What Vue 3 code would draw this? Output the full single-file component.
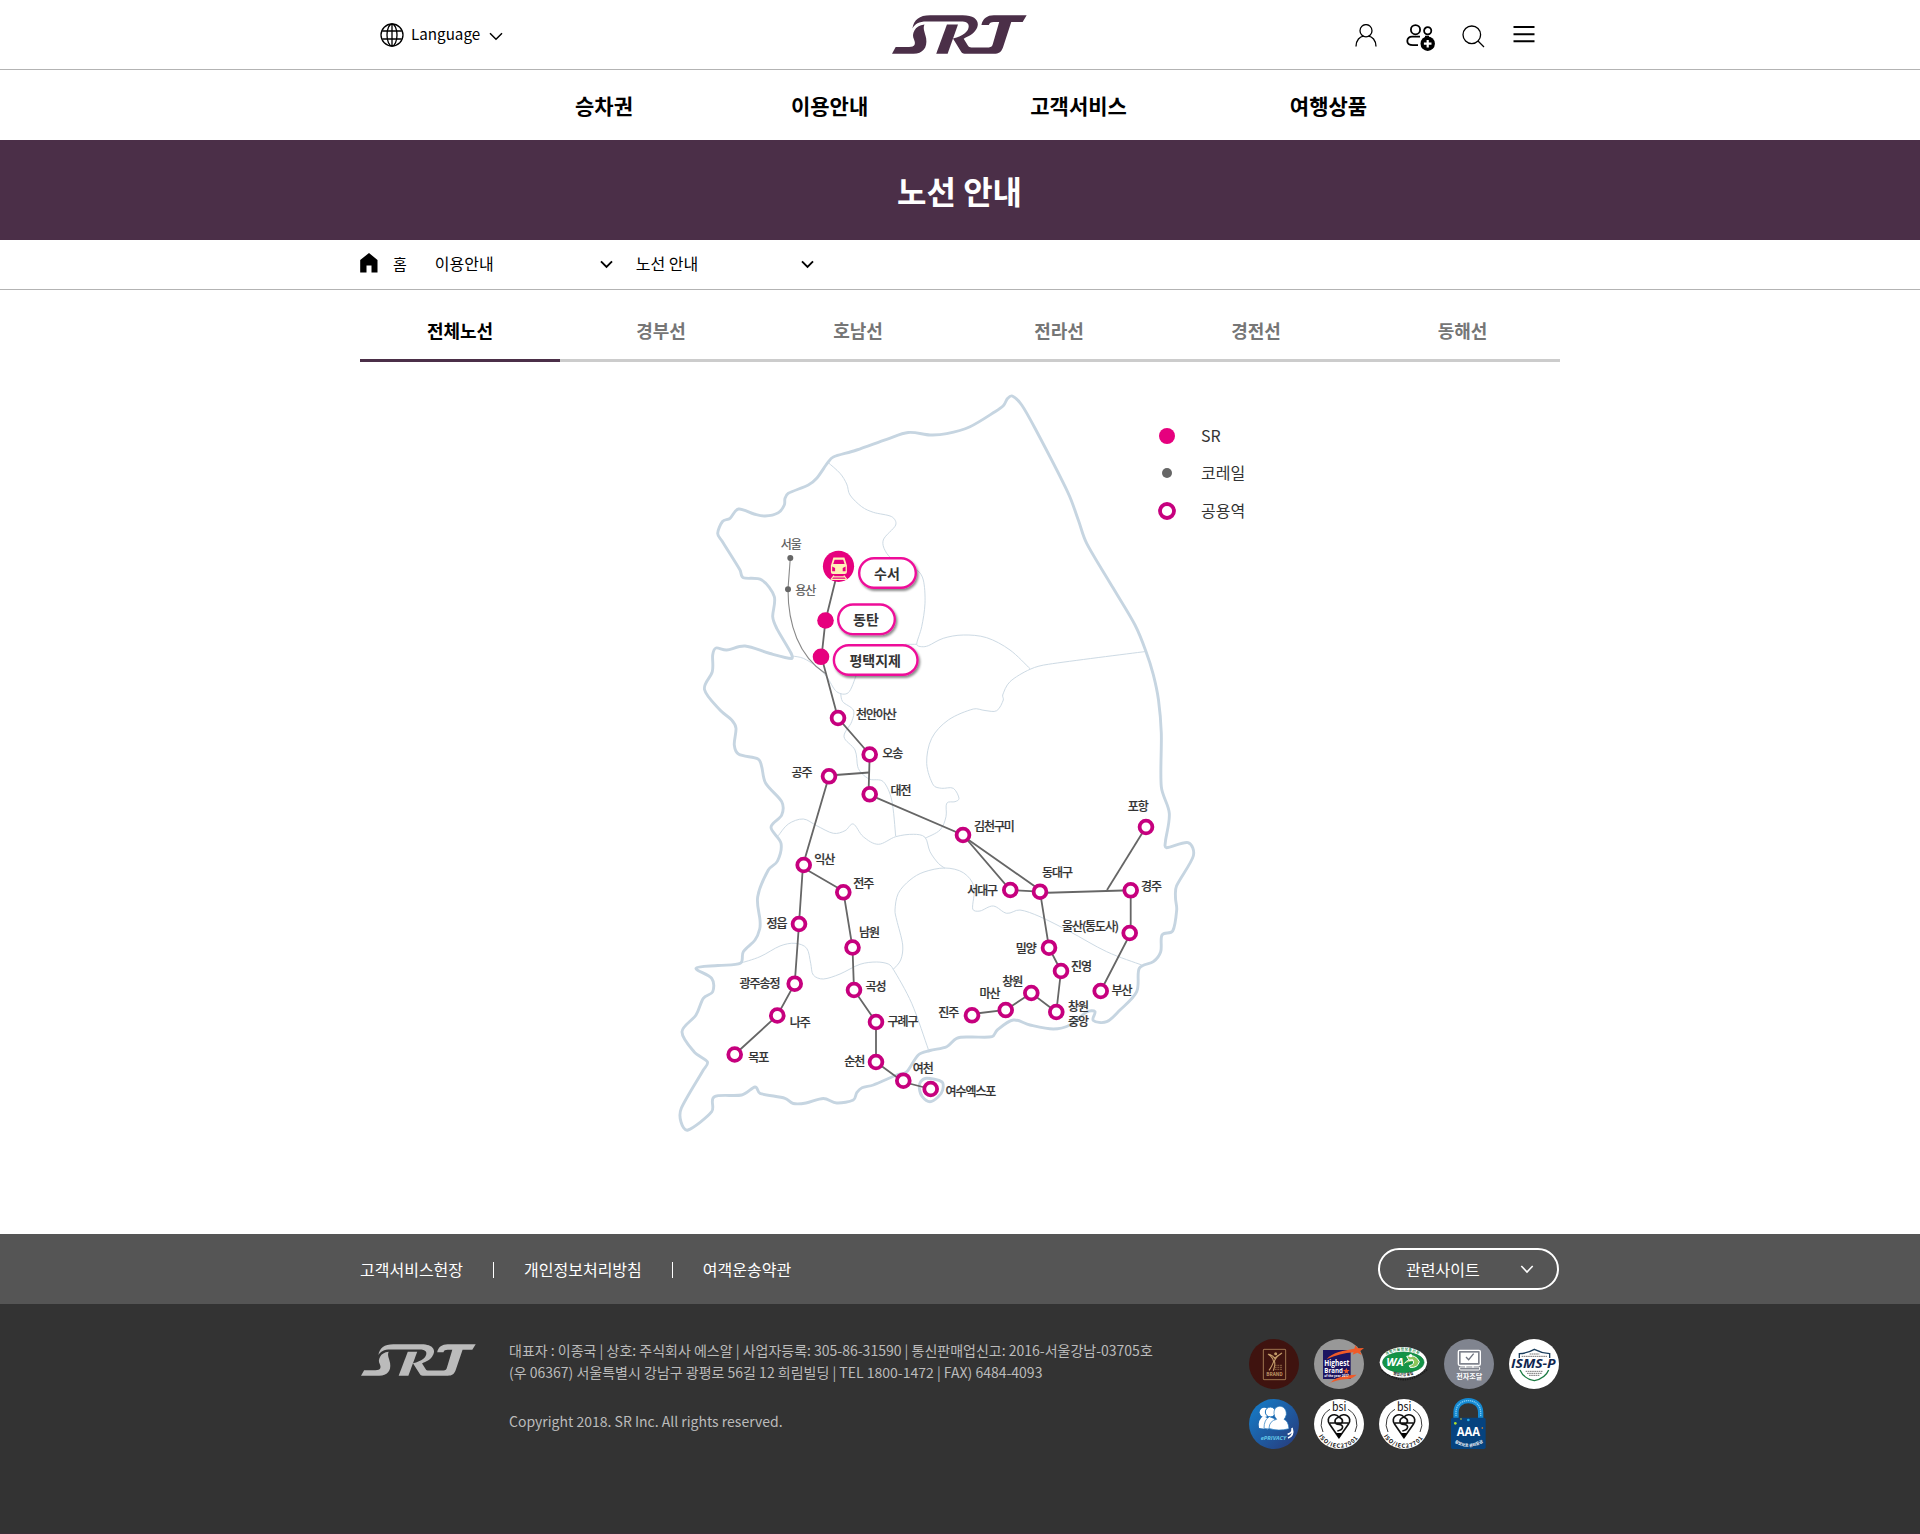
<script setup>
const menu = ['승차권', '이용안내', '고객서비스', '여행상품']
const tabs = ['전체노선', '경부선', '호남선', '전라선', '경전선', '동해선']
const policies = ['고객서비스헌장', '개인정보처리방침', '여객운송약관']

// Catmull-Rom spline through the given points
function smooth(source, closed = false) {
  const p = source.trim().split(/\s+/).map((s) => s.split(',').map(Number))
  const n = p.length
  const at = (i) => (closed ? p[(i + n) % n] : p[Math.max(0, Math.min(n - 1, i))])
  let d = `M${p[0][0]} ${p[0][1]}`
  const last = closed ? n : n - 1
  for (let i = 0; i < last; i++) {
    const a = at(i - 1)
    const b = at(i)
    const c = at(i + 1)
    const e = at(i + 2)
    const len = Math.hypot(c[0] - b[0], c[1] - b[1])
    const k1 = Math.min(1 / 6, (0.36 * len) / (Math.hypot(c[0] - a[0], c[1] - a[1]) || 1))
    const k2 = Math.min(1 / 6, (0.36 * len) / (Math.hypot(e[0] - b[0], e[1] - b[1]) || 1))
    const x1 = b[0] + (c[0] - a[0]) * k1
    const y1 = b[1] + (c[1] - a[1]) * k1
    const x2 = c[0] - (e[0] - b[0]) * k2
    const y2 = c[1] - (e[1] - b[1]) * k2
    d += `C${x1.toFixed(1)} ${y1.toFixed(1)} ${x2.toFixed(1)} ${y2.toFixed(1)} ${c[0]} ${c[1]}`
  }
  return closed ? d + 'Z' : d
}

const coast = smooth(
  `1012.3,396 1007.5,398.5 1003.5,405.5 995,411.7 970,426.7 946.7,433.7 930,435 908.3,432.5 886.7,439.3 856.7,450
  833.3,457 827.7,462.7 816.7,478.3 808.3,485 788.3,493.3 785,498.3 784.3,505 778.3,512.7 765,516 754,514 738.5,509
  730,518.3 722.5,521.5 717.7,533.3 722,541 740,570 743.3,577.7 761.7,580 774.3,596.7 772.7,616.7 776.7,628.3
  791,653 791.3,658.5 770,653.5 745,646 726.7,650 716,648 712.7,655 712.3,671.7 704.5,689.5 720,710 731.7,720
  736,728.3 734.3,745 738.8,754.3 758,759 761.7,766.7 765.7,783.3 781.7,801.7 781.7,815 771,827.3 781,843.3
  777.5,861 768.3,870 757.7,896.7 760,920 759.7,929 755,940 743.3,951.7 740.3,963.3 718,965.5 696,968.3 711.7,978.3
  712.7,991.7 703.3,998.3 696,1015 682,1031.7 694,1051.7 707.3,1061.7 703.3,1070 681.3,1108.3 681,1122
  688,1130 711.7,1111.7 714.3,1096.7 741.7,1095 755,1087 760,1093.3 785,1098.3 793.3,1103.5 806,1103 823.3,1098.5
  836.7,1103 853.3,1100 856.7,1092.7 862,1087.7 873.3,1085 896.7,1075 906.7,1071.7 918.3,1055 930,1050.5
  946.7,1046.7 956.7,1038.3 970,1037 992,1036.7 997.3,1030 1013.3,1020 1030,1025 1053.3,1029 1070,1025
  1086.7,1012 1095,1011.7 1093.3,1020.5 1106.7,1021.7 1120,1010 1136.7,991.7 1139.3,968.3 1153.3,961.7 1160.7,951.7
  1162,935 1172.7,931 1176.7,910 1175.5,898 1176.5,886 1193.3,856 1188,842.7 1166.5,847.7 1165.5,841 1169.3,813.3
  1161.3,786.7 1161.3,733 1158.5,700 1153.3,674.7 1145.7,650.7 1135,625 1113.3,588.3 1086.7,543.3 1078.3,520
  1068.3,493.3 1035,428.3 1021.7,405`,
  true
)
const island = smooth(
  '920.7,1081.7 926.7,1078.3 941.7,1081.7 942.7,1090 938.3,1096.7 930,1101.7 922.3,1096.7 919.3,1088',
  true
)
const borders = [
  '828.3,462.7 840,473.3 846.7,484 850,495 861.7,506.7 873.3,512.3 891.7,516.7 895.7,525 883.3,540 886.7,553.3 897,562 916.7,570 923.3,580 925,603.3 921.7,626.7 916.7,644.3 921.7,646.7 928.3,645.7 943.3,638.3 963.3,635 986.7,637.7 1010,650 1030,668.7',
  '1145.7,651.5 1048.3,664.3 1030,669.3 1010,681.7 1002.7,695 1003.3,700 996.7,710.7 985,710.5 973.3,709 948.3,720 931.7,738.3 926.7,763.3 933.3,785 941.7,788.3 953.3,788.3 959,798.3 955,801.7 946.7,803.3 946,816.7 940,830 925,838.3',
  '916.7,644.3 905,644.3',
  '792.3,656 803.3,658.3 816.7,666.7 826.7,676.7 836.7,691.7 848.3,692.7 856,676',
  '840.7,693.3 842.7,701.7 853.3,710 851.7,721.7 844,736.7 855,750 857.7,766.7 861.7,773.3 870,779.3 883.3,781.7 891.7,800 895.7,836',
  '778.3,835.7 788.3,824 803.3,819 816.7,825.7 833.3,833.3 845,830.7 853.3,824 863.3,836.7 878.3,844.3 895.7,836.7 913.3,834.3 925,837.3 930,851.7 938.3,863.3 945,868.3',
  '893.3,969.3 900.7,960 902.7,945 896.7,920 895,910 898.3,893.3 910,880 924,872 945,868 963.3,872.7 974,886.7 972.7,909 980,911 993.3,906 1006.7,913.3 1020,910 1040,916.7 1070,931.7 1106.7,951.7 1141.7,965',
  '740,963.3 760,956.7 780,946 795,943.3 806.7,948.3 810.7,963.3 813.3,975 823.3,979 840,974 860,964.3 876.7,962 888.3,964 893.3,969.3 911.7,1003.3 928.3,1049.3'
].map((b) => smooth(b))

const rails = [
  '838,570 825.5,620.5 821.5,657 838,718 869.7,754.5 868.5,794.3 963,835 1010.3,890 1040,891.7',
  '829,775.5 869,772.5',
  '829,776.3 803,865 799,924 794.7,983.7 777.3,1015.5 734.7,1054.5',
  '803.7,868 843.3,891 852.5,947.5 854,990 876,1022 876,1062 903.3,1082 930.7,1089',
  '963,836 1040,890 1040,893 1130.7,890.3 1130.7,933 1100.7,991',
  '1146,827 1107,890',
  '1040,891.7 1049,947.7 1061,971 1056.3,1012 1031.3,993 1005.7,1010 972,1014'
]

const stations = [
  [838, 718], [869.7, 754.5], [829, 776.3], [869.7, 794.3], [963, 835], [803.7, 865],
  [843.3, 892.3], [799, 924], [852.5, 947.5], [794.7, 983.7], [854, 990], [777.3, 1015.5],
  [876, 1022], [734.7, 1054.5], [876, 1062], [903.3, 1080.7], [930.7, 1089], [1010.3, 890],
  [1040, 891.7], [1130.7, 890.3], [1146, 827], [1129.7, 933], [1049, 947.7], [1061, 971],
  [1100.7, 991], [1031.3, 993], [1005.7, 1010], [1056.3, 1012], [972, 1015.3]
]

const names = [
  ['천안아산', 856, 718.5], ['오송', 882.2, 757.5], ['공주', 791.6, 776.5], ['대전', 890.6, 794.5],
  ['김천구미', 974, 830.5], ['익산', 814.2, 864], ['전주', 853.2, 888], ['서대구', 967.2, 894.5],
  ['동대구', 1042, 877], ['경주', 1141, 891], ['포항', 1127.8, 810.5], ['정읍', 766.6, 928],
  ['남원', 859, 937], ['광주송정', 739.6, 988], ['곡성', 865.6, 991], ['나주', 789.8, 1026.5],
  ['구례구', 887.6, 1025.5], ['목포', 748.2, 1062], ['순천', 844.2, 1066], ['여천', 912.8, 1073],
  ['여수엑스포', 945.6, 1095.5], ['울산(통도사)', 1062, 930.5], ['밀양', 1015.8, 952.5],
  ['진영', 1071, 971], ['창원', 1002.2, 986], ['마산', 979.5, 998], ['진주', 938.2, 1017],
  ['창원', 1068, 1011], ['중앙', 1068, 1025.5], ['부산', 1111.6, 995]
]

const pills = [
  { name: '수서', x: 858, y: 557, w: 59 },
  { name: '동탄', x: 837, y: 603.3, w: 59 },
  { name: '평택지제', x: 832.7, y: 644, w: 86 }
]

const logo = [
  'M82 62C86 36 102 22 135 22H232C276 22 286 46 270 68C260 84 240 88 235 93L248 114C250 118 253 119 258 119H310C318 119 320 116 322 109L341 42H325C316 42 312 45 310 51H288C292 32 305 22 325 22H423L411 42H377L352 120C346 134 340 138 325 138H238C232 138 229 136 226 130L203 92C235 84 250 70 250 55C250 45 240 41 228 41H125C100 41 90 48 82 62Z',
  'M185 50H218L187 138H153Z',
  'M88 68C93 58 103 52 118 50C112 62 120 75 123 92C127 120 113 138 85 138H21L32 118H72C90 118 92 108 87 96C82 85 83 78 88 68Z'
]
</script>

<template>
  <div class="page">
    <header class="top">
      <div class="wrap top-row">
        <div class="language">
          <svg width="24" height="24" viewBox="0 0 24 24" class="line">
            <circle cx="12" cy="12" r="11" />
            <ellipse cx="12" cy="12" rx="5" ry="11" />
            <path d="M12 1V23M2.2 8H21.8M2.2 16H21.8" />
          </svg>
          <span>Language</span>
          <svg width="14" height="9" viewBox="0 0 14 9" class="line"><path d="M1 1.2L7 7.2L13 1.2" stroke-width="1.5" /></svg>
        </div>
        <svg class="logo" width="135" height="39" viewBox="21 21 403 118" preserveAspectRatio="none">
          <path v-for="d in logo" :key="d" :d="d" />
        </svg>
        <div class="tools">
          <svg width="22" height="23" viewBox="0 0 22 23" class="line">
            <ellipse cx="11" cy="6.7" rx="6" ry="6.1" />
            <path d="M1 22.5C1 16 5 12.5 8.6 12.2M21 22.5C21 16 17 12.5 13.4 12.2" />
          </svg>
          <svg width="30" height="28" viewBox="0 0 30 28" class="line bold">
            <circle cx="9.5" cy="5.7" r="4.6" />
            <circle cx="21.7" cy="6.8" r="3.6" />
            <path d="M14 12.7H6C3.5 12.7 1.3 14 1.3 17C1.3 20.5 4 21.2 7 21.2H12M19 12.7H23" />
            <circle cx="21.7" cy="19.7" r="7.2" class="solid" />
            <path d="M21.7 15.9V23.5M17.9 19.7H25.5" class="white" />
          </svg>
          <svg width="23" height="23" viewBox="0 0 23 23" class="line">
            <circle cx="9.8" cy="9.8" r="8.8" />
            <path d="M16 16L22 22" />
          </svg>
          <svg width="22" height="18" viewBox="0 0 22 18" class="line">
            <path d="M.5 2H21.5M.5 9.2H21.5M.5 16.3H21.5" stroke-width="1.9" />
          </svg>
        </div>
      </div>
    </header>

    <nav class="menu">
      <a v-for="m in menu" :key="m">{{ m }}</a>
    </nav>

    <div class="hero"><h1>노선 안내</h1></div>

    <div class="crumbs">
      <div class="wrap crumb-row">
        <svg width="18" height="20" viewBox="0 0 18 20"><path d="M9 0L17.5 7V19.5H11.5V12.5H6.5V19.5H.2V7Z" /></svg>
        <span class="home">홈</span>
        <div class="select">
          <span>이용안내</span>
          <svg width="13" height="9" viewBox="0 0 13 9" class="line"><path d="M1 1.4L6.5 7L12 1.4" stroke-width="1.9" /></svg>
        </div>
        <div class="select">
          <span>노선 안내</span>
          <svg width="13" height="9" viewBox="0 0 13 9" class="line"><path d="M1 1.4L6.5 7L12 1.4" stroke-width="1.9" /></svg>
        </div>
      </div>
    </div>

    <main>
      <ul class="wrap tabs">
        <li v-for="(t, i) in tabs" :key="t" :class="{ on: i === 0 }">{{ t }}</li>
      </ul>

      <svg class="map" width="1200" height="872" viewBox="360 362 1200 872">
        <defs>
          <filter id="drop" x="-10%" y="-20%" width="130%" height="160%">
            <feDropShadow dx="1.5" dy="2" stdDeviation="1" flood-color="#000" flood-opacity=".45" />
          </filter>
        </defs>
        <path v-for="b in borders" :key="b" :d="b" class="border" />
        <path :d="coast" class="coast" />
        <path :d="island" class="coast" />

        <path d="M790.3 558L788 589.3C788 625 799 656 825 673.3" class="korail" />
        <polyline v-for="r in rails" :key="r" :points="r" class="rail" />
        <circle cx="790.3" cy="558" r="3" fill="#666" />
        <circle cx="788" cy="589.3" r="3" fill="#666" />
        <circle v-for="(s, i) in stations" :key="i" :cx="s[0]" :cy="s[1]" r="6.4" class="ring" />
        <circle cx="825.5" cy="620.5" r="8.3" fill="#e6007e" />
        <circle cx="821" cy="656.8" r="8.3" fill="#e6007e" />

        <circle cx="838.5" cy="566.3" r="15.6" fill="#e6007e" />
        <g transform="translate(838.9 567.5)">
          <path d="M-5.500 -10H5.500L8 -2V4.500Q8 6.500 6 6.500H-6Q-8 6.500 -8 4.500V-2Z" fill="#fff0b8" />
          <path d="M-4.300 -7.700H4.300L5.700 -3.500H-5.700Z" fill="#e6007e" />
          <path d="M-6.700 -1L-3.800 .6V3.800H-6.700ZM6.700 -1L3.800 .6V3.800H6.700Z" fill="#e6007e" />
          <path d="M-5 8L-8 12M5 8L8 12M-6 9.300H6M-7.500 11.800H7.500" stroke="#fff0b8" stroke-width="1.2" />
        </g>

        <g class="names">
          <text x="780.8" y="548.5" class="gray">서울</text>
          <text x="795.3" y="594.5" class="gray">용산</text>
          <text v-for="(t, i) in names" :key="i" :x="t[1]" :y="t[2]">{{ t[0] }}</text>
        </g>

        <g v-for="p in pills" :key="p.name">
          <rect :x="p.x + 1.2" :y="p.y + 1.2" :width="p.w - 2.4" height="29.6" rx="14.8" class="pill" filter="url(#drop)" />
          <text :x="p.x + p.w / 2 - 0.5" :y="p.y + 21.5" class="pill-name">{{ p.name }}</text>
        </g>

        <circle cx="1167" cy="436" r="8" fill="#e6007e" />
        <circle cx="1167" cy="473" r="5" fill="#666" />
        <circle cx="1167" cy="511" r="7" class="ring" />
        <g class="legend">
          <text x="1201" y="442.3">SR</text>
          <text x="1201" y="479.3">코레일</text>
          <text x="1201" y="517.3">공용역</text>
        </g>
      </svg>
    </main>

    <footer>
      <div class="links">
        <div class="wrap link-row">
          <a v-for="p in policies" :key="p">{{ p }}</a>
          <button>
            <span>관련사이트</span>
            <svg width="14" height="9" viewBox="0 0 14 9"><path d="M1.3 1L7 7L12.7 1" fill="none" stroke="#fff" stroke-width="1.6" /></svg>
          </button>
        </div>
      </div>
      <div class="info">
        <div class="wrap info-row">
          <svg class="foot-logo" width="115" height="32" viewBox="21 21 403 118" preserveAspectRatio="none">
            <path v-for="d in logo" :key="d" :d="d" />
          </svg>
          <address>
            <p>대표자 : 이종국 | 상호: 주식회사 에스알 | 사업자등록: 305-86-31590 | 통신판매업신고: 2016-서울강남-03705호</p>
            <p>(우 06367) 서울특별시 강남구 광평로 56길 12 희림빌딩 | TEL 1800-1472 | FAX) 6484-4093</p>
            <p class="copy">Copyright 2018. SR Inc. All rights reserved.</p>
          </address>
          <div class="badges">
            <svg viewBox="0 0 150 150">
              <circle cx="75" cy="75" r="75" fill="#3f130f" />
              <rect x="43" y="31" width="67" height="91" rx="2" fill="none" stroke="#b38a5e" stroke-width="2.5" />
              <circle cx="80" cy="44" r="4.5" fill="#c29a68" />
              <path d="M57 45Q72 54 74 68Q68 84 60 94M99 42Q82 52 76 66Q80 77 73 95M60 46Q73 50 77 58Q84 50 96 45" fill="none" stroke="#c29a68" stroke-width="3.5" />
              <path d="M77 79H100M77 85H100M77 91H100" stroke="#8a6040" stroke-width="3" stroke-dasharray="6 2" />
              <text x="52" y="111" font-size="15" font-weight="700" fill="#c29a68" textLength="49" lengthAdjust="spacingAndGlyphs">BRAND</text>
            </svg>
            <svg viewBox="0 0 150 150">
              <circle cx="75" cy="75" r="75" fill="#989898" />
              <rect x="27" y="33" width="83" height="87" fill="#1d1560" />
              <path d="M38 60C55 40 90 34 121 29L124 19L131 28L150 27L138 37L143 48L130 41L116 47L119 40C90 42 65 49 38 60Z" fill="#f05a28" />
              <path d="M50 132C58 117 90 108 128 107C118 116 110 119 100 120C78 121 60 127 42 134Z" fill="#f05a28" />
              <path d="M97 86L100 93H107L101 98L103 105L97 101L91 105L93 98L87 93H94Z" fill="#f05a28" />
              <g class="latin" fill="#fff">
                <text x="31" y="81" font-size="24" textLength="75" lengthAdjust="spacingAndGlyphs">Highest</text>
                <text x="31" y="103" font-size="22" textLength="56" lengthAdjust="spacingAndGlyphs">Brand</text>
                <text x="31" y="113" font-size="10" textLength="73" lengthAdjust="spacingAndGlyphs">of the year 2017</text>
              </g>
            </svg>
            <svg viewBox="0 0 150 150">
              <path d="M8 93Q75 151 144 92" fill="none" stroke="#1b1b1b" stroke-width="5" stroke-dasharray="4 3" />
              <ellipse cx="73" cy="70" rx="71" ry="46" fill="#fff" />
              <ellipse cx="73" cy="70" rx="62" ry="31" fill="#149447" stroke="#0a7a3d" stroke-width="2" />
              <path id="waTop" d="M22 49Q73 19 124 49" fill="none" />
              <path id="waBottom" d="M38 104Q73 118 108 104" fill="none" />
              <text font-size="11" font-weight="700" fill="#128342"><textPath href="#waTop" textLength="102">과학기술정보통신부</textPath></text>
              <text font-size="11" font-weight="700" fill="#222"><textPath href="#waBottom" startOffset="4">웹접근성 품질</textPath></text>
              <text x="22" y="81" font-size="32" class="latin slant" fill="#fff" textLength="52" lengthAdjust="spacingAndGlyphs">WA</text>
              <path d="M83 52Q110 44 121 68Q116 88 93 85L91 80Q110 76 101 62L91 65ZM76 73Q90 57 103 66" fill="#8ec65a" stroke="#fff" stroke-width="3" />
              <circle cx="95" cy="50" r="5" fill="#fff" />
            </svg>
            <svg viewBox="0 0 150 150">
              <circle cx="75" cy="75" r="75" fill="#80848f" />
              <rect x="43" y="34" width="66" height="45" rx="4" fill="none" stroke="#fff" stroke-width="4" />
              <rect x="50" y="41" width="52" height="31" fill="#fff" />
              <path d="M66 54L74 62L89 44" fill="none" stroke="#6f7480" stroke-width="4" />
              <path d="M65 79V86M87 79V86" stroke="#fff" stroke-width="4" />
              <rect x="47" y="84" width="60" height="9" rx="3" fill="none" stroke="#fff" stroke-width="3" />
              <text x="37" y="121" font-size="21" font-weight="700" fill="#fff" textLength="78" lengthAdjust="spacingAndGlyphs">전자조달</text>
            </svg>
            <svg viewBox="0 0 150 150">
              <circle cx="75" cy="75" r="75" fill="#fff" />
              <path d="M31 57V44Q55 43 76 31Q99 43 122 44V57" fill="none" stroke="#1a3d5c" stroke-width="4" />
              <path d="M33 93Q43 118 76 125Q109 118 119 93" fill="none" stroke="#1b7a42" stroke-width="4" />
              <path d="M62 45H91M38 52H114M50 97H102M54 103H98M60 109H92" stroke="#777" stroke-width="3" stroke-dasharray="5 1.5" />
              <text x="6" y="87" font-size="35" class="latin slant" fill="#10264f" textLength="134" lengthAdjust="spacingAndGlyphs">ISMS-P</text>
            </svg>
            <svg viewBox="0 0 150 150">
              <defs><linearGradient id="blue" x1="0" y1="0" x2="1" y2="1"><stop offset="0" stop-color="#1480cc" /><stop offset="1" stop-color="#283878" /></linearGradient></defs>
              <circle cx="75" cy="75" r="75" fill="url(#blue)" />
              <g fill="#fff">
                <circle cx="46" cy="40" r="14" /><path d="M30 87Q25 63 43 51L60 60L57 91Z" />
                <circle cx="64" cy="39" r="15" stroke="#1972bb" stroke-width="3" /><path d="M45 88Q45 62 61 53L77 59L72 91Z" stroke="#1972bb" stroke-width="2" />
                <path d="M75 44C72 14 114 14 112 47Q109 57 105 61Q118 66 120 89Q88 98 60 88Q61 65 83 61Q76 54 75 44Z" stroke="#1972bb" stroke-width="2" />
              </g>
              <path d="M116 106Q132 102 129 87Q136 110 117 117" fill="none" stroke="#fff" stroke-width="5" />
              <text x="35" y="122" font-size="18" class="latin slant" fill="#63c8e8" textLength="77" lengthAdjust="spacingAndGlyphs">ePRIVACY</text>
            </svg>
            <svg v-for="n in ['27001', '27701']" :key="n" viewBox="0 0 150 150">
              <circle cx="75" cy="75" r="75" fill="#fff" />
              <path d="M48 31A51 51 0 0 0 27 99M102 31A51 51 0 0 1 123 99" fill="none" stroke="#111" stroke-width="2.5" />
              <path :id="'iso' + n" d="M14 111A70 70 0 0 0 136 111" fill="none" />
              <path d="M75 116L47 76C32 54 60 38 75 54C90 38 118 54 103 76ZM47 72H103M75 54C58 60 60 76 75 76C90 78 90 92 70 96M75 54C90 62 88 72 75 76" fill="none" stroke="#111" stroke-width="5" />
              <path d="M66 102H84L75 118Z" />
              <text x="54" y="37" font-size="35" fill="#111" textLength="43" lengthAdjust="spacingAndGlyphs">bsi</text>
              <text font-size="17" font-weight="700" fill="#111"><textPath :href="'#iso' + n" textLength="140">ISO/IEC{{ n }}</textPath></text>
            </svg>
            <svg viewBox="0 0 150 150">
              <path d="M36 60V40C36 -7 110 -7 110 40V60" fill="none" stroke="#1489d2" stroke-width="16" />
              <path d="M36 51V40C36 -7 110 -7 110 40V51" fill="none" stroke="#7ec9f2" stroke-width="4" stroke-dasharray="4 2" />
              <rect x="21" y="56" width="104" height="94" rx="5" fill="#06437f" />
              <circle cx="34" cy="73" r="4" fill="#aee02c" /><circle cx="73" cy="63" r="4" fill="#20a8e8" />
              <circle cx="51" cy="60" r="2.5" fill="#e7d02c" /><circle cx="115" cy="87" r="2.5" fill="#f08a2c" />
              <text x="38" y="112" font-size="38" class="latin" fill="#fff" textLength="70" lengthAdjust="spacingAndGlyphs">AAA</text>
              <path id="lock" d="M29 129Q73 158 118 129" fill="none" />
              <text font-size="12" font-weight="700" fill="#fff"><textPath href="#lock" startOffset="3">정보보호 관리등급</textPath></text>
            </svg>
          </div>
        </div>
      </div>
    </footer>
  </div>
</template>

<style>
body {
  margin: 0;
}
</style>

<style scoped>
.page {
  width: 100%;
  height: 1534px;
  background: #fff;
  color: #000;
  font-family: "Noto Sans CJK KR", "Noto Sans", sans-serif;
  font-size: 16px;
  line-height: 1.5;
  display: flex;
  flex-direction: column;
}
.page * {
  box-sizing: border-box;
}
.wrap {
  width: 1200px;
  margin: 0 auto;
}
.line {
  fill: none;
  stroke: #000;
  stroke-width: 1.3;
}
.line.bold {
  stroke-width: 1.8;
}
.line .solid {
  fill: #000;
  stroke: none;
}
.line .white {
  stroke: #fff;
  stroke-width: 2.2;
}
.top {
  height: 70px;
  border-bottom: 1px solid #b3b3b3;
}
.top-row {
  height: 69px;
  padding: 0 25px 0 20px;
  display: grid;
  grid-template-columns: 512px 1fr auto;
}
.language {
  display: flex;
  align-items: center;
  height: 69px;
}
.language span {
  margin: -3px 9px 0 7px;
  font-size: 15.2px;
}
.language svg:last-child {
  margin-top: 3px;
}
.logo {
  margin-top: 15px;
  fill: #4b2f48;
}
.tools {
  display: flex;
  padding-top: 24px;
  align-items: flex-start;
}
.tools svg:nth-child(2) {
  margin-left: 29px;
}
.tools svg:nth-child(3) {
  margin: 1px 0 0 26px;
}
.tools svg:nth-child(4) {
  margin: 1px 0 0 28px;
}
.menu {
  height: 70px;
  display: flex;
  padding: 1px 0 0 575px;
  gap: 158px;
  align-items: center;
  font-size: 21px;
  font-weight: 700;
}
.menu a {
  white-space: nowrap;
}
.menu a:nth-child(3) {
  margin-left: 4px;
}
.menu a:nth-child(4) {
  margin-left: 5px;
}
.hero {
  height: 100px;
  background: #4b2f48;
  color: #fff;
  display: flex;
  align-items: center;
  justify-content: center;
}
h1 {
  margin: 0 1px 1px 0;
  font-size: 32px;
  font-weight: 700;
}
.crumbs {
  height: 50px;
  border-bottom: 1px solid #b3b3b3;
}
.crumb-row {
  display: flex;
  align-items: center;
  height: 46px;
}
.home {
  font-size: 15px;
  margin: 2px 28px 0 15px;
}
.select {
  width: 201px;
  display: flex;
  justify-content: space-between;
  align-items: center;
  padding-right: 23px;
}
.select span {
  margin-top: -1px;
}
.select svg {
  margin-top: 3px;
}
main {
  width: 1200px;
  margin: 0 auto;
  height: 944px;
}
.tabs {
  list-style: none;
  padding: 0;
  display: grid;
  grid-template-columns: 200px 202px 192px 210px 184px 212px;
  height: 72px;
  border-bottom: 3px solid #ccc;
  font-size: 18px;
  font-weight: 700;
  color: #767676;
  text-align: center;
}
.tabs li {
  height: 72px;
  padding-top: 27px;
}
.tabs li:last-child {
  padding-left: 17px;
}
.tabs .on {
  color: #000;
  border-bottom: 3px solid #4b2f48;
}
.map {
  display: block;
}
.coast {
  fill: none;
  stroke: #c6d5e1;
  stroke-width: 2.9;
  stroke-linejoin: round;
}
.border {
  fill: none;
  stroke: #cddae4;
  stroke-width: 1;
}
.rail {
  fill: none;
  stroke: #666;
  stroke-width: 1.8;
}
.korail {
  fill: none;
  stroke: #888;
  stroke-width: 1.1;
}
.ring {
  fill: #fff;
  stroke: #c6007e;
  stroke-width: 3.8;
}
.names text {
  font-size: 12px;
  font-weight: 500;
  letter-spacing: -1.1px;
  fill: #333;
  stroke: #333;
  stroke-width: 0.2px;
}
.names .gray {
  fill: #555;
  stroke: #555;
  font-weight: 400;
}
.pill {
  fill: #fff;
  stroke: #ee1199;
  stroke-width: 2.4;
}
.pill-name {
  font-size: 14px;
  font-weight: 700;
  fill: #333;
  text-anchor: middle;
}
.legend text {
  font-size: 16px;
  fill: #333;
}
.latin {
  font-family: "Open Sans", sans-serif;
  font-weight: 700;
}
.slant {
  font-style: italic;
}
footer {
  flex: 1;
  color: #fff;
  display: flex;
  flex-direction: column;
}
.links {
  height: 70px;
  background: #555;
}
.link-row {
  height: 70px;
  display: flex;
  align-items: center;
}
.link-row a + a {
  margin-left: 30px;
  padding-left: 31px;
  background: linear-gradient(#fff, #fff) 0 5px / 1px 16px no-repeat;
}
button {
  margin-left: auto;
  margin-right: 1px;
  width: 181px;
  height: 42px;
  padding: 0 23px 0 26px;
  border: 2px solid #fff;
  border-radius: 21px;
  background: none;
  color: #fff;
  font: inherit;
  display: flex;
  align-items: center;
  justify-content: space-between;
}
.info {
  flex: 1;
  background: #333;
  border-bottom: 1px solid #3a2f38;
}
.info-row {
  display: flex;
}
.foot-logo {
  margin: 40px 1px 0 1px;
  fill: #bbb;
}
address {
  margin: 35px 0 0 32px;
  font-style: normal;
  font-size: 14px;
  line-height: 22px;
  color: #bbb;
  white-space: nowrap;
}
address p {
  margin: 0;
}
address .copy {
  margin-top: 27px;
}
.badges {
  margin: 35px 1px 0 auto;
  display: grid;
  grid-template-columns: repeat(5, 50px);
  gap: 10px 15px;
}
.badges svg {
  width: 50px;
  height: 50px;
  overflow: visible;
}
</style>
